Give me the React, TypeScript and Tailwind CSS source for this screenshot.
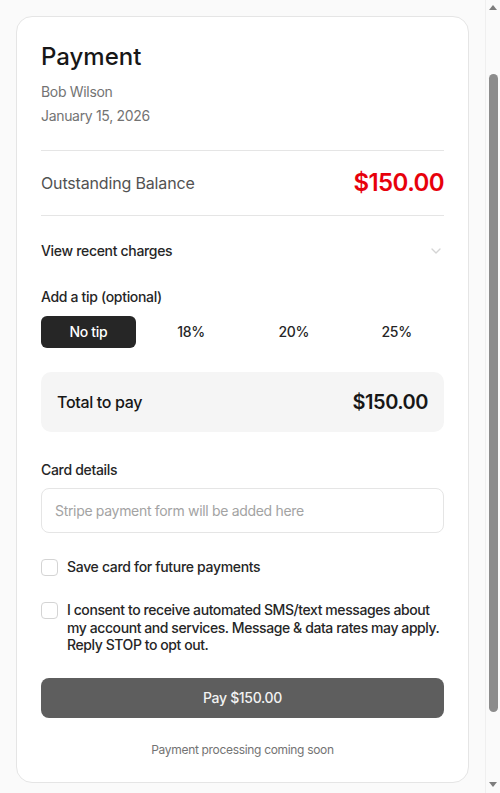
import { useState } from 'react';
import { ChevronDown } from 'lucide-react';

const tips = ['No tip', '18%', '20%', '25%'];

export default function App() {
  const [tip, setTip] = useState('No tip');
  const [saveCard, setSaveCard] = useState(false);
  const [smsConsent, setSmsConsent] = useState(false);

  return (
    <div
      className="min-h-screen bg-[#fafafa] text-[#171717] tracking-[-0.02em]"
      style={{ fontFamily: 'Inter, "Noto Sans", sans-serif' }}
    >
      <div className="w-[485px] p-4">
        <div className="rounded-2xl border border-[#e5e5e5] bg-white p-6">
          {/* Header */}
          <h1 className="text-2xl leading-8 font-medium tracking-normal text-[#171717]">Payment</h1>
          <p className="mt-[7px] text-sm leading-6 text-[#737373]">Bob Wilson</p>
          <p className="text-sm leading-6 text-[#737373]">January 15, 2026</p>

          {/* Balance */}
          <div className="mt-[22px] flex items-center justify-between border-y border-[#e5e5e5] py-4">
            <span className="text-base tracking-[-0.01em] text-[#525252]">Outstanding Balance</span>
            <span className="text-2xl leading-8 font-semibold tracking-tight text-red-600">$150.00</span>
          </div>

          <button className="mt-[25px] flex h-5 w-full items-center justify-between text-sm font-medium text-[#262626]">
            <span>View recent charges</span>
            <ChevronDown className="h-4 w-4 text-[#d4d4d4]" />
          </button>

          {/* Tip */}
          <p className="mt-[26px] text-sm leading-5 font-medium text-[#262626]">Add a tip (optional)</p>
          <div className="mt-[9px] grid grid-cols-4 gap-2">
            {tips.map((t) => (
              <button
                key={t}
                onClick={() => setTip(t)}
                className={`h-8 rounded-md text-sm font-medium ${
                  tip === t ? 'bg-[#262626] text-white' : 'text-[#262626]'
                }`}
              >
                {t}
              </button>
            ))}
          </div>

          <div className="mt-6 flex items-center justify-between rounded-[10px] bg-[#f5f5f5] px-4 py-4">
            <span className="text-base font-medium text-[#171717]">Total to pay</span>
            <span className="text-xl leading-7 font-semibold tracking-tight text-[#171717]">$150.00</span>
          </div>

          {/* Card */}
          <p className="mt-7 text-sm leading-5 font-medium text-[#262626]">Card details</p>
          <div className="mt-2 flex h-[45px] items-center rounded-lg border border-[#e5e5e5] px-[13px] text-sm text-[#a3a3a3]">
            Stripe payment form will be added here
          </div>

          <label className="mt-6 flex items-center gap-[9px] text-sm leading-5 font-medium text-[#262626]">
            <button
              onClick={() => setSaveCard(!saveCard)}
              className={`h-[17px] w-[17px] shrink-0 rounded border border-[#d4d4d4] ${saveCard ? 'bg-[#262626]' : 'bg-white'}`}
            />
            <span>Save card for future payments</span>
          </label>

          <label className="mt-6 flex items-start gap-[9px] text-sm leading-[17.5px] font-medium tracking-[-0.03em] text-[#262626]">
            <button
              onClick={() => setSmsConsent(!smsConsent)}
              className={`mt-[1px] h-[17px] w-[17px] shrink-0 rounded border border-[#d4d4d4] ${smsConsent ? 'bg-[#262626]' : 'bg-white'}`}
            />
            <span>
              I consent to receive automated SMS/text messages about my account and services. Message &amp; data rates
              may apply. Reply STOP to opt out.
            </span>
          </label>

          <button
            disabled
            className="mt-6 flex h-10 w-full items-center justify-center rounded-lg bg-[#5e5e5e] text-sm font-medium text-[#f2f2f2]"
          >
            Pay $150.00
          </button>
          <p className="mt-6 text-center text-xs leading-4 text-[#737373]">Payment processing coming soon</p>
        </div>
      </div>

      {/* Scrollbar */}
      <div className="fixed top-0 right-0 flex h-screen w-[15px] flex-col items-center border-l border-[#efefef] bg-[#fafafa]">
        <div className="mt-[5px] h-0 w-0 border-x-[4px] border-b-[5px] border-x-transparent border-b-[#7d7d7d]" />
        <div className="mt-[64px] h-[638px] w-[9px] rounded-[5px] bg-[#8c8c8c]" />
        <div className="mt-auto mb-[6px] h-0 w-0 border-x-[4px] border-t-[5px] border-x-transparent border-t-[#7d7d7d]" />
      </div>
    </div>
  );
}
